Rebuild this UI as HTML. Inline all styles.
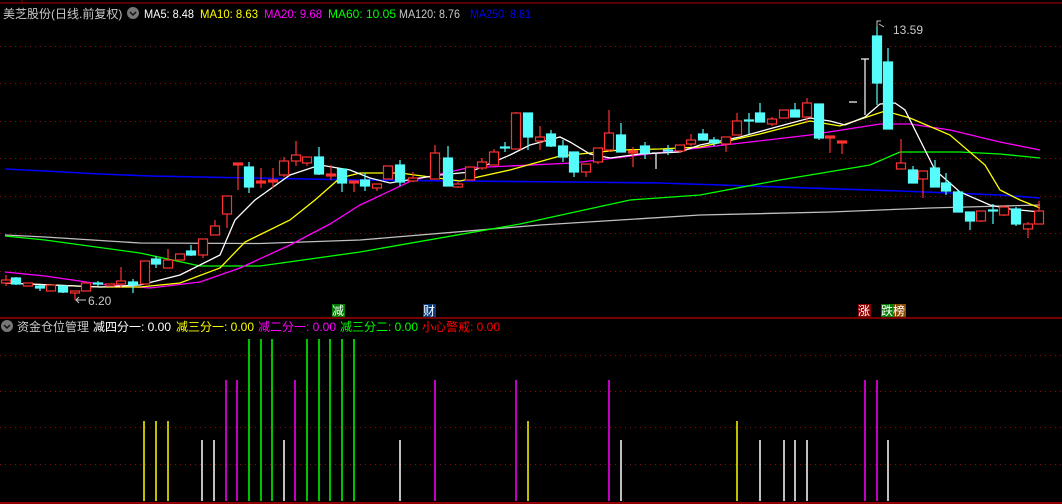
<!DOCTYPE html>
<html><head><meta charset="utf-8"><style>
html,body{margin:0;padding:0;background:#000;width:1062px;height:504px;overflow:hidden}
svg{display:block}
text{font-family:"Liberation Sans","Noto Sans CJK SC",sans-serif;font-size:12px}
</style></head><body>
<svg width="1062" height="504" viewBox="0 0 1062 504" xmlns="http://www.w3.org/2000/svg">
<rect width="1062" height="504" fill="#000"/>
<line x1="0" y1="3" x2="1062" y2="3" stroke="#b00000" stroke-width="1"/>
<line x1="22" y1="0" x2="22" y2="3" stroke="#b00000"/>
<g stroke="#8a1010" stroke-dasharray="1,4" stroke-width="1">
<line x1="0" y1="46.5" x2="1062" y2="46.5"/><line x1="0" y1="83.5" x2="1062" y2="83.5"/>
<line x1="0" y1="121.5" x2="1062" y2="121.5"/><line x1="0" y1="158.5" x2="1062" y2="158.5"/>
<line x1="0" y1="196.5" x2="1062" y2="196.5"/><line x1="0" y1="233.5" x2="1062" y2="233.5"/>
<line x1="0" y1="271.5" x2="1062" y2="271.5"/>
<line x1="0" y1="355.5" x2="1062" y2="355.5"/><line x1="0" y1="391.5" x2="1062" y2="391.5"/>
<line x1="0" y1="427.5" x2="1062" y2="427.5"/><line x1="0" y1="464.5" x2="1062" y2="464.5"/>
</g>
<!-- header -->
<text x="3" y="18" fill="#c8c8c8">美芝股份(日线.前复权)</text>
<circle cx="133" cy="13" r="6" fill="#777"/><path d="M130 12 L133 15 L136 12" stroke="#111" stroke-width="1.5" fill="none"/>
<text x="144" y="18" fill="#fff" textLength="50" lengthAdjust="spacingAndGlyphs">MA5: 8.48</text>
<text x="200" y="18" fill="#ffff00" textLength="58" lengthAdjust="spacingAndGlyphs">MA10: 8.63</text>
<text x="264" y="18" fill="#ff00ff" textLength="58" lengthAdjust="spacingAndGlyphs">MA20: 9.68</text>
<text x="328" y="18" fill="#00ff00" textLength="68" lengthAdjust="spacingAndGlyphs">MA60: 10.05</text>
<text x="399" y="18" fill="#c8c8c8" textLength="61" lengthAdjust="spacingAndGlyphs">MA120: 8.76</text>
<text x="470" y="18" fill="#0000ff" textLength="61" lengthAdjust="spacingAndGlyphs">MA250: 8.81</text>
<!-- MA lines -->
<g fill="none" stroke-width="1.3">
<polyline stroke="#0000ff" stroke-width="1.6" points="5,169 45,171 100,174 150,176 250,178 360,180 570,182 660,183 750,186 900,191 1000,195 1040,198"/>
<polyline stroke="#c0c0c0" points="5,235 45,237 140,243 260,243.5 360,240 540,225 700,215 830,212 930,208 1040,205"/>
<polyline stroke="#00ff00" points="5,236 45,240 140,253 200,266 260,266 360,252 520,224 630,200 700,195 780,180 870,165 900,152 960,152 1000,154 1040,158"/>
<polyline stroke="#ff00ff" points="5,272 45,276 100,284 150,288 200,282 240,268 290,245 330,224 360,205 373,199 413,180 467,168 573,163 640,155 707,147 810,135 880,124 910,124 950,130 1000,142 1040,150"/>
<polyline stroke="#ffff00" points="5,283 100,287 140,287 180,283 220,268 245,242 290,220 315,200 340,178 360,173 400,173 430,177 460,181 510,170 560,156 620,150 660,149 700,147 760,134 810,121 840,126 870,116 885,111 910,118 950,135 985,165 1000,190 1020,200 1040,208"/>
<polyline stroke="#ffffff" points="5,283 100,287 140,285 180,275 220,255 235,220 255,200 290,175 320,165 350,170 370,178 390,183 420,178 440,175 470,172 510,155 530,145 560,137 570,142 590,154 610,158 640,154 680,152 700,145 740,137 780,126 810,118 830,121 845,125 865,117 880,104 895,103 905,110 920,140 935,170 960,192 990,205 1010,209 1040,212"/>
</g>
<!-- red candles -->
<g stroke="#ff3232" fill="#000" stroke-width="1.2">
<line x1="6" y1="275" x2="6" y2="286"/><rect x="1.5" y="280" width="9" height="3"/>
<rect x="23.5" y="283" width="9" height="3"/>
<rect x="46.5" y="285" width="9" height="6"/>
<line x1="75" y1="291" x2="75" y2="300"/><rect x="70.5" y="291" width="9" height="2"/>
<rect x="81.5" y="283" width="9" height="8"/>
<rect x="105.5" y="284" width="9" height="2"/>
<line x1="121" y1="267" x2="121" y2="288"/><rect x="116.5" y="281" width="9" height="3"/>
<rect x="140.5" y="261" width="9" height="23"/>
<line x1="168" y1="249" x2="168" y2="268"/><rect x="163.5" y="260" width="9" height="8"/>
<rect x="175.5" y="254" width="9" height="6"/>
<line x1="203" y1="239" x2="203" y2="258"/><rect x="198.5" y="239" width="9" height="16"/>
<line x1="215" y1="220" x2="215" y2="235"/><rect x="210.5" y="226" width="9" height="9"/>
<line x1="227" y1="196" x2="227" y2="228"/><rect x="222.5" y="196" width="9" height="18"/>
<line x1="238" y1="164" x2="238" y2="190"/><rect x="233.5" y="163" width="9" height="2" fill="#ff3232"/>
<line x1="261" y1="168" x2="261" y2="188"/><rect x="256.5" y="181" width="9" height="2" fill="#ff3232"/>
<line x1="273" y1="168" x2="273" y2="188"/><rect x="268.5" y="180" width="9" height="2" fill="#ff3232"/>
<line x1="284" y1="157" x2="284" y2="177"/><rect x="279.5" y="161" width="9" height="14"/>
<line x1="296" y1="141" x2="296" y2="166"/><rect x="291.5" y="155" width="9" height="6"/>
<line x1="307" y1="157" x2="307" y2="166"/><rect x="302.5" y="157" width="9" height="6"/>
<line x1="331" y1="165" x2="331" y2="180"/><rect x="326.5" y="174" width="9" height="2" fill="#ff3232"/>
<line x1="354" y1="182" x2="354" y2="192"/><rect x="349.5" y="181" width="9" height="2" fill="#ff3232"/>
<line x1="377" y1="184" x2="377" y2="191"/><rect x="372.5" y="184" width="9" height="4"/>
<rect x="383.5" y="166" width="9" height="13"/>
<line x1="413" y1="172" x2="413" y2="182"/><rect x="408.5" y="178" width="9" height="3"/>
<line x1="435" y1="145" x2="435" y2="179"/><rect x="430.5" y="153" width="9" height="26"/>
<line x1="458" y1="182" x2="458" y2="188"/><rect x="453.5" y="184" width="9" height="3"/>
<rect x="465.5" y="167" width="9" height="13"/>
<line x1="482" y1="158" x2="482" y2="170"/><rect x="477.5" y="162" width="9" height="6"/>
<line x1="494" y1="149" x2="494" y2="165"/><rect x="489.5" y="152" width="9" height="13"/>
<line x1="516" y1="112" x2="516" y2="149"/><rect x="511.5" y="113" width="9" height="36"/>
<line x1="540" y1="126" x2="540" y2="150"/><rect x="535.5" y="137" width="9" height="4"/>
<line x1="586" y1="164" x2="586" y2="177"/><rect x="581.5" y="164" width="9" height="8"/>
<line x1="598" y1="148" x2="598" y2="164"/><rect x="593.5" y="148" width="9" height="14"/>
<line x1="609" y1="110" x2="609" y2="152"/><rect x="604.5" y="133" width="9" height="17"/>
<line x1="633" y1="147" x2="633" y2="167"/><rect x="628.5" y="151" width="9" height="2" fill="#ff3232"/>
<line x1="680" y1="145" x2="680" y2="153"/><rect x="675.5" y="145" width="9" height="6"/>
<line x1="691" y1="134" x2="691" y2="146"/><rect x="686.5" y="140" width="9" height="4"/>
<line x1="726" y1="137" x2="726" y2="152"/><rect x="721.5" y="137" width="9" height="7"/>
<line x1="737" y1="113" x2="737" y2="135"/><rect x="732.5" y="121" width="9" height="14"/>
<line x1="772" y1="117" x2="772" y2="126"/><rect x="767.5" y="119" width="9" height="5"/>
<rect x="779.5" y="110" width="9" height="8"/>
<line x1="807" y1="98" x2="807" y2="122"/><rect x="802.5" y="103" width="9" height="14"/>
<line x1="830" y1="137" x2="830" y2="153"/><rect x="825.5" y="136" width="9" height="2" fill="#ff3232"/>
<line x1="842" y1="142" x2="842" y2="154"/><rect x="837.5" y="141" width="9" height="2" fill="#ff3232"/>
<line x1="901" y1="139" x2="901" y2="169"/><rect x="896.5" y="163" width="9" height="6"/>
<line x1="923" y1="171" x2="923" y2="198"/><rect x="918.5" y="171" width="9" height="8"/>
<line x1="981" y1="211" x2="981" y2="222"/><rect x="976.5" y="211" width="9" height="10"/>
<line x1="1004" y1="205" x2="1004" y2="216"/><rect x="999.5" y="207" width="9" height="8"/>
<line x1="1028" y1="222" x2="1028" y2="238"/><rect x="1023.5" y="224" width="9" height="5"/>
<line x1="1039" y1="201" x2="1039" y2="224"/><rect x="1034.5" y="211" width="9" height="13"/>
</g>
<!-- cyan candles -->
<g stroke="#54fcfc" fill="#54fcfc" stroke-width="1.2">
<line x1="16" y1="277" x2="16" y2="285"/><rect x="11.5" y="278" width="9" height="6"/>
<line x1="40" y1="285" x2="40" y2="291"/><rect x="35.5" y="286" width="9" height="2"/>
<line x1="63" y1="286" x2="63" y2="293"/><rect x="58.5" y="286" width="9" height="6"/>
<line x1="98" y1="281" x2="98" y2="286"/><rect x="93.5" y="283" width="9" height="1"/>
<line x1="133" y1="279" x2="133" y2="293"/><rect x="128.5" y="282" width="9" height="3"/>
<line x1="156" y1="256" x2="156" y2="268"/><rect x="151.5" y="259" width="9" height="5"/>
<line x1="191" y1="245" x2="191" y2="256"/><rect x="186.5" y="251" width="9" height="4"/>
<line x1="249" y1="162" x2="249" y2="193"/><rect x="244.5" y="167" width="9" height="20"/>
<line x1="319" y1="147" x2="319" y2="175"/><rect x="314.5" y="157" width="9" height="17"/>
<line x1="342" y1="169" x2="342" y2="192"/><rect x="337.5" y="169" width="9" height="14"/>
<line x1="365" y1="173" x2="365" y2="191"/><rect x="360.5" y="180" width="9" height="6"/>
<line x1="400" y1="160" x2="400" y2="186"/><rect x="395.5" y="165" width="9" height="17"/>
<line x1="448" y1="146" x2="448" y2="186"/><rect x="443.5" y="158" width="9" height="28"/>
<line x1="505" y1="142" x2="505" y2="152"/><rect x="500.5" y="147" width="9" height="1"/>
<line x1="528" y1="113" x2="528" y2="150"/><rect x="523.5" y="113" width="9" height="24"/>
<line x1="551" y1="130" x2="551" y2="147"/><rect x="546.5" y="134" width="9" height="12"/>
<line x1="563" y1="140" x2="563" y2="162"/><rect x="558.5" y="146" width="9" height="11"/>
<line x1="574" y1="152" x2="574" y2="177"/><rect x="569.5" y="152" width="9" height="20"/>
<line x1="621" y1="123" x2="621" y2="152"/><rect x="616.5" y="135" width="9" height="17"/>
<line x1="645" y1="142" x2="645" y2="159"/><rect x="640.5" y="146" width="9" height="7"/>
<line x1="668" y1="145" x2="668" y2="155"/><rect x="663.5" y="150" width="9" height="1"/>
<line x1="703" y1="129" x2="703" y2="140"/><rect x="698.5" y="134" width="9" height="6"/>
<line x1="714" y1="137" x2="714" y2="146"/><rect x="709.5" y="140" width="9" height="3"/>
<line x1="749" y1="113" x2="749" y2="134"/><rect x="744.5" y="120" width="9" height="1"/>
<line x1="760" y1="103" x2="760" y2="122"/><rect x="755.5" y="113" width="9" height="9"/>
<line x1="795" y1="103" x2="795" y2="117"/><rect x="790.5" y="110" width="9" height="7"/>
<line x1="819" y1="104" x2="819" y2="140"/><rect x="814.5" y="104" width="9" height="34"/>
<line x1="877" y1="27" x2="877" y2="105"/><rect x="872.5" y="36" width="9" height="47"/>
<line x1="888" y1="48" x2="888" y2="129"/><rect x="883.5" y="62" width="9" height="67"/>
<line x1="913" y1="166" x2="913" y2="183"/><rect x="908.5" y="170" width="9" height="13"/>
<line x1="935" y1="160" x2="935" y2="187"/><rect x="930.5" y="168" width="9" height="19"/>
<line x1="946" y1="173" x2="946" y2="195"/><rect x="941.5" y="183" width="9" height="8"/>
<line x1="958" y1="190" x2="958" y2="212"/><rect x="953.5" y="192" width="9" height="20"/>
<line x1="970" y1="212" x2="970" y2="230"/><rect x="965.5" y="212" width="9" height="9"/>
<line x1="993" y1="204" x2="993" y2="224"/><rect x="988.5" y="210" width="9" height="1"/>
<line x1="1016" y1="207" x2="1016" y2="226"/><rect x="1011.5" y="209" width="9" height="15"/>
</g>
<g stroke="#fff" stroke-width="1.2">
<line x1="656" y1="153" x2="656" y2="169"/><line x1="652" y1="153" x2="660" y2="153"/>
<line x1="849" y1="102" x2="857" y2="102"/>
<line x1="865" y1="59" x2="865" y2="115"/><line x1="861" y1="59" x2="869" y2="59"/>
</g>
<!-- price labels -->
<path d="M877 27 L877 21 L881 21 M879 24 L884 27" stroke="#c8c8c8" fill="none"/>
<text x="893" y="34" fill="#c8c8c8">13.59</text>
<path d="M76 300 L86 300 M79 297 L76 300 L79 303" stroke="#c8c8c8" fill="none"/>
<text x="88" y="305" fill="#c8c8c8">6.20</text>
<!-- badges -->
<rect x="332" y="304" width="13" height="13" fill="#007a00"/><text x="332" y="315" fill="#fff">减</text>
<rect x="423" y="304" width="13" height="13" fill="#0a3a7a"/><text x="423" y="315" fill="#fff">财</text>
<rect x="858" y="304" width="13" height="13" fill="#8a0000"/><text x="858" y="315" fill="#fff">涨</text>
<rect x="881" y="304" width="12" height="13" fill="#007a00"/><rect x="893" y="304" width="13" height="13" fill="#8a4a00"/>
<text x="881" y="315" fill="#fff">跌榜</text>
<line x1="0" y1="318" x2="1062" y2="318" stroke="#c00000" stroke-width="1.3"/>
<!-- lower legend -->
<circle cx="7" cy="326" r="6" fill="#777"/><path d="M4 325 L7 328 L10 325" stroke="#111" stroke-width="1.5" fill="none"/>
<text x="17" y="331" fill="#c8c8c8">资金仓位管理</text>
<text x="93" y="331" fill="#fff">减四分一: 0.00</text>
<text x="176" y="331" fill="#ffff00">减三分一: 0.00</text>
<text x="258" y="331" fill="#ff00ff">减二分一: 0.00</text>
<text x="340" y="331" fill="#00ff00">减三分二: 0.00</text>
<text x="422" y="331" fill="#ff0000">小心警戒: 0.00</text>
<!-- lower bars -->
<g stroke-width="1.5">
<g stroke="#ffff00"><line x1="144" y1="421" x2="144" y2="501"/><line x1="156" y1="421" x2="156" y2="501"/><line x1="168" y1="421" x2="168" y2="501"/><line x1="528" y1="421" x2="528" y2="501"/><line x1="737" y1="421" x2="737" y2="501"/></g>
<g stroke="#ffffff"><line x1="202" y1="440" x2="202" y2="501"/><line x1="214" y1="440" x2="214" y2="501"/><line x1="284" y1="440" x2="284" y2="501"/><line x1="400" y1="440" x2="400" y2="501"/><line x1="621" y1="440" x2="621" y2="501"/><line x1="760" y1="440" x2="760" y2="501"/><line x1="784" y1="440" x2="784" y2="501"/><line x1="795" y1="440" x2="795" y2="501"/><line x1="807" y1="440" x2="807" y2="501"/><line x1="888" y1="440" x2="888" y2="501"/></g>
<g stroke="#ff00ff"><line x1="226" y1="380" x2="226" y2="501"/><line x1="237" y1="380" x2="237" y2="501"/><line x1="295" y1="380" x2="295" y2="501"/><line x1="435" y1="380" x2="435" y2="501"/><line x1="516" y1="380" x2="516" y2="501"/><line x1="609" y1="380" x2="609" y2="501"/><line x1="865" y1="380" x2="865" y2="501"/><line x1="877" y1="380" x2="877" y2="501"/></g>
<g stroke="#00ff00"><line x1="249" y1="339" x2="249" y2="501"/><line x1="261" y1="339" x2="261" y2="501"/><line x1="272" y1="339" x2="272" y2="501"/><line x1="307" y1="339" x2="307" y2="501"/><line x1="319" y1="339" x2="319" y2="501"/><line x1="330" y1="339" x2="330" y2="501"/><line x1="342" y1="339" x2="342" y2="501"/><line x1="354" y1="339" x2="354" y2="501"/></g>
</g>
<line x1="0" y1="503" x2="1062" y2="503" stroke="#c00000" stroke-width="1.5"/>
</svg>
</body></html>
